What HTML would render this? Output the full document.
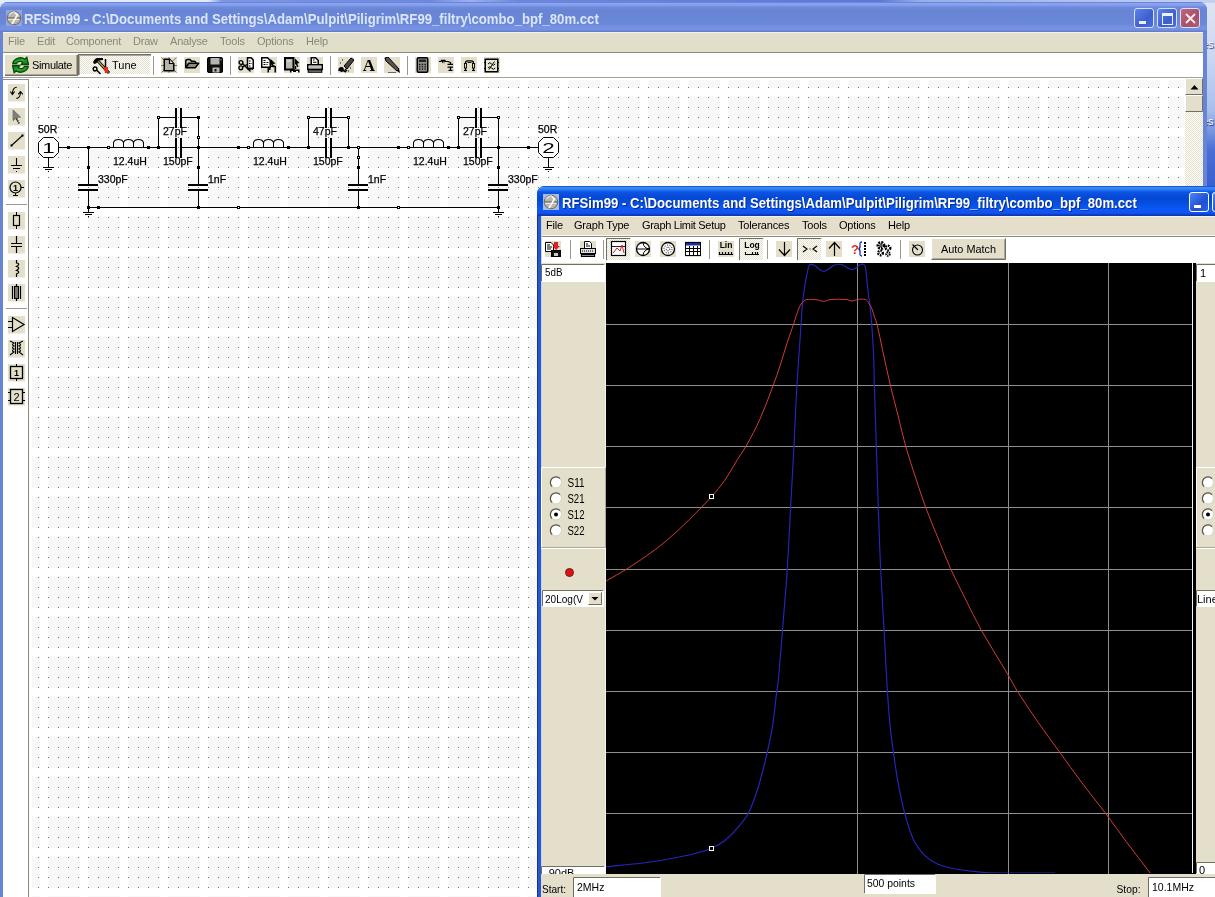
<!DOCTYPE html>
<html>
<head>
<meta charset="utf-8">
<title>RFSim99</title>
<style>
html,body{margin:0;padding:0;}
html{width:1215px;height:897px;overflow:hidden;}
body{width:1215px;height:897px;overflow:hidden;position:relative;font-family:"Liberation Sans",sans-serif;font-size:11px;color:#000;
 background:linear-gradient(to bottom,#dfe6f5 0px,#c9d6f0 60px,#a9bfec 110px,#4a6fd6 150px,#3459cf 200px,#3a63d4 897px);}
.abs{position:absolute;}
#w1,#w2{will-change:transform;}
#w1{position:absolute;left:0;top:2px;width:1207px;height:895px;background:#6884d4;border-radius:8px 8px 0 0;overflow:hidden;}
#w1 .title{position:absolute;left:0;top:0;width:1207px;height:30px;background:linear-gradient(to bottom,#5a76cc 0px,#88a4f2 1.5px,#84a0ee 3px,#6f8bd9 5px,#6884d4 8px,#6a88d8 22px,#7692e4 25px,#7690e0 28px,#5e78c4 30px);}
.ttext{position:absolute;white-space:nowrap;font-family:"Liberation Sans",sans-serif;font-weight:bold;font-size:14px;line-height:14px;transform-origin:0 0;transform:scaleX(0.94);}
#w1 .menu{position:absolute;left:3px;top:30px;width:1200px;height:20px;background:#e1dfc9;box-shadow:inset 0 1px 0 #f2f2ec;}
.mi{position:absolute;top:3px;white-space:nowrap;font-size:11px;letter-spacing:-0.2px;}
#w1 .mi{color:#8b887a;}
#w1 .tb{position:absolute;left:3px;top:50px;width:1200px;height:25px;background:#fff;border-top:1px solid #8d8b7c;box-sizing:border-box;}
#w1 .work{position:absolute;left:3px;top:75px;width:1200px;height:820px;background:#fff;border-top:1px solid #a5a294;box-sizing:border-box;}
.ib{position:absolute;background:#e3dfca;}
#w2{position:absolute;left:537px;top:186px;width:678px;height:711px;background:linear-gradient(to right,#12349e 0,#12349e 1px,#2a56cc 1px,#2a56cc 4px);border-radius:8px 0 0 0;overflow:hidden;}
#w2 .title{position:absolute;left:0;top:0;width:678px;height:30px;background:linear-gradient(to bottom,#0a3cb8 0px,#3a8af8 1.5px,#2c7cf4 3.5px,#0c55e2 6px,#0448d4 12px,#0650e2 18px,#0c58f4 23px,#1452f4 27px,#0a3cb4 29px,#0838b0 30px);}
#w2 .menu{position:absolute;left:4px;top:30px;width:674px;height:20px;background:#e4deca;box-shadow:inset 0 1px 0 #f4f2f4, inset 0 -1px 0 #f8f8f2;}
#w2 .tb{position:absolute;left:4px;top:50px;width:674px;height:27px;background:#fff;border-top:1px solid #8d8b7c;box-sizing:border-box;}
#w2 .body{position:absolute;left:4px;top:77px;width:674px;height:634px;background:#e3dfca;}
.cb{position:absolute;width:18px;height:18px;border:1px solid #d6e0f8;border-radius:3px;}
.inp{position:absolute;background:#fff;border:1px solid #7f9db9;box-sizing:border-box;white-space:nowrap;overflow:hidden;font-size:11px;}
</style>
</head>
<body>
<div class="abs" style="left:0;top:0;width:1215px;height:3px;background:linear-gradient(to right,#e4ebf8 0px,#e4ebf8 208px,#7e96e2 222px,#7088dc 430px,#9cb0ec 470px,#6e86da 520px,#5e78d4 880px,#98aee8 920px,#c4d0f0 1215px);"></div>
<div class="abs" style="left:1207px;top:38px;width:8px;height:14px;overflow:hidden;"><span class="abs" style="left:-5px;top:0;color:#fff;font-size:11px;text-shadow:1px 1px 1px #1a2a6a;">es</span></div>
<div class="abs" style="left:1207px;top:115px;width:8px;height:14px;overflow:hidden;"><span class="abs" style="left:-5px;top:0;color:#fff;font-size:11px;text-shadow:1px 1px 1px #1a2a6a;">es</span></div>
<!-- ================= WINDOW 1 : schematic ================= -->
<div id="w1">
 <div class="title">
  <svg class="abs" style="left:6px;top:8px" width="16" height="16" viewBox="0 0 16 16"><rect width="16" height="16" fill="#8fa6e2"/><circle cx="8" cy="8" r="6.800" fill="#b9b6ad" stroke="#6b6960" stroke-width="1"/><path d="M1.500 8 H14.500" stroke="#55534b" stroke-width="1.200"/><path d="M1.800 9.300 H13" stroke="#f4f2ec" stroke-width="1"/><path d="M6 14 L12 4 M9 2.500 L11 5" stroke="#fbfaf8" stroke-width="1.600"/><path d="M3 5 Q6 1.500 9 2" stroke="#e8e6e0" stroke-width="1.200" fill="none"/></svg>
  <div class="cb" style="left:1134px;top:6px;background:linear-gradient(135deg,#5f82e6,#3c5fcd 60%,#4a6edb);"><div class="abs" style="left:4px;top:12px;width:7px;height:3px;background:#eaf0fc;"></div></div>
  <div class="cb" style="left:1157px;top:6px;background:linear-gradient(135deg,#5f82e6,#3c5fcd 60%,#4a6edb);"><div class="abs" style="left:4px;top:4px;width:9px;height:8px;border:1px solid #eaf0fc;border-top-width:3px;"></div></div>
  <div class="cb" style="left:1180px;top:6px;background:linear-gradient(135deg,#c0647a,#a8506a 60%,#b45c72);"><svg class="abs" style="left:3px;top:3px" width="13" height="13" viewBox="0 0 13 13"><path d="M2 2 L11 11 M11 2 L2 11" stroke="#f6e8ec" stroke-width="2"/></svg></div>
  <div class="ttext" id="t1" style="left:24px;top:10px;color:#dbe5fa;">RFSim99 - C:\Documents and Settings\Adam\Pulpit\Piligrim\RF99_filtry\combo_bpf_80m.cct</div>
 </div>
 <div class="menu">
  <span class="mi" style="left:5px">File</span>
  <span class="mi" style="left:34px">Edit</span>
  <span class="mi" style="left:63px">Component</span>
  <span class="mi" style="left:130px">Draw</span>
  <span class="mi" style="left:167px">Analyse</span>
  <span class="mi" style="left:217px">Tools</span>
  <span class="mi" style="left:254px">Options</span>
  <span class="mi" style="left:303px">Help</span>
 </div>
 <div class="tb" id="tb1">
  <!-- Simulate (raised) -->
  <div class="abs" style="left:1px;top:1px;width:73px;height:21px;background:#e3dfca;box-shadow:inset 1px 1px 0 #fff,inset -1px -1px 0 #aca899, 1px 1px 0 #716f64;"></div>
  <svg class="abs" style="left:9px;top:3px" width="17" height="18" viewBox="0 0 17 18">
   <defs><linearGradient id="gg" x1="0" y1="0" x2="1" y2="1"><stop offset="0" stop-color="#0a6410"/><stop offset="0.500" stop-color="#2eb032"/><stop offset="1" stop-color="#0a6410"/></linearGradient></defs>
   <path d="M0.800 7.500 C1.500 2.500 9 0 12.800 3.300 L14.800 1.300 L16.500 8.500 L9.300 8.500 L10.800 6.500 C8.800 4.600 5.500 5 4.600 7.500 Z" fill="url(#gg)" stroke="#064a08" stroke-width="1.300"/>
   <path d="M16.200 10.500 C15.500 15.500 8 18 4.200 14.700 L2.200 16.700 L0.500 9.500 L7.700 9.500 L6.200 11.500 C8.200 13.400 11.500 13 12.400 10.500 Z" fill="url(#gg)" stroke="#064a08" stroke-width="1.300"/>
  </svg>
  <span class="abs" style="left:29px;top:6px;font-size:11px;letter-spacing:-0.35px;">Simulate</span>
  <!-- Tune (sunken, checked) -->
  <div class="abs" style="left:75px;top:1px;width:73px;height:21px;background:repeating-conic-gradient(#fff 0 25%,#e3dfca 0 50%) 0 0/2px 2px;box-shadow:inset 1px 1px 0 #716f64,inset 2px 2px 0 #aca899,inset -1px -1px 0 #fff;"></div>
  <svg class="abs" style="left:89px;top:4px" width="19" height="18" viewBox="0 0 19 18">
   <path d="M6 4 L17 16" stroke="#000" stroke-width="3"/><path d="M6 4 L16.500 15.500" stroke="#b89a3c" stroke-width="1.400"/>
   <path d="M1 5 L3 2 L5 1 H11 V3 L7 3.500 L4 6.500 L2 7 Z" fill="#000"/>
   <path d="M13.500 2 V10" stroke="#000" stroke-width="1.500"/>
   <path d="M11.800 10 H16 V16 H13 Z" fill="#e0301a"/>
   <path d="M1.500 13 C0 9.500 5 9 5 12 C5 14 2 14.500 1.500 13 M4.500 13 L8.500 17" stroke="#000" stroke-width="1.500" fill="none"/>
  </svg>
  <span class="abs" style="left:109px;top:6px;font-size:11px;letter-spacing:0px;">Tune</span>
  <div class="abs" style="left:150px;top:3px;width:1px;height:19px;background:#9d9a8b;"></div>
  <svg class="abs" style="left:158px;top:4px;background:#e3dfca" width="16" height="16" viewBox="0 0 16 16"><path d="M0.500 0.500 L3 3 M15.500 0.500 L11 4.500 M0.500 15.500 L3 13 M15.500 15.500 L13 13 M0 8.500 H3 M13 8.500 H16 M8 0 V2 M8 14 V16" stroke="#6a6a60" stroke-width="0.900"/><path d="M3.250 2.250 H8.500 L12.750 6.500 V13.750 H3.250 Z" fill="#b4b4ae" stroke="#000" stroke-width="1.500"/><path d="M8.500 2.500 V6.500 H12.500" fill="#e3dfca" stroke="#000" stroke-width="1.200"/></svg>
  <svg class="abs" style="left:181px;top:4px;background:#e3dfca" width="16" height="16" viewBox="0 0 16 16"><path d="M1.750 10 V4 Q1.750 2.500 3.500 2.500 H6 L7.500 4.250 H10.500 Q11.750 4.250 11.750 6" fill="#c4c2b2" stroke="#000" stroke-width="1.500"/><path d="M1.750 10.750 L4.750 6.250 H14.750 L11.250 10.750 Z" fill="#8c8a7c" stroke="#000" stroke-width="1.500" stroke-linejoin="round"/></svg>
  <svg class="abs" style="left:204px;top:4px;background:#e3dfca" width="16" height="16" viewBox="0 0 16 16"><rect x="0.500" y="0.500" width="15" height="15" rx="1.500" fill="#111" stroke="#000"/><rect x="3.500" y="1" width="9" height="6.500" fill="#b4b4b0"/><rect x="5.500" y="10.500" width="7" height="5" fill="#b8b8b4"/><rect x="7.500" y="12" width="2" height="2.500" fill="#111"/><rect x="13.500" y="2" width="1" height="1.500" fill="#999"/></svg>
  <svg class="abs" style="left:235px;top:4px;background:#e3dfca" width="16" height="16" viewBox="0 0 16 16"><path d="M9.500 0.750 H13 L15.250 3 V11.250 H9.500 Z" fill="#fff" stroke="#000" stroke-width="1.500"/><path d="M11 4 H12.500 M11 6.500 H14 M11 9 H12.500" stroke="#000" stroke-width="1.200" stroke-dasharray="1.500 1"/><circle cx="3" cy="5.500" r="1.900" fill="none" stroke="#000" stroke-width="1.400"/><circle cx="2.800" cy="10.800" r="1.900" fill="none" stroke="#000" stroke-width="1.400"/><path d="M4.500 6.500 L12.500 14.500 M4.500 10 L9 7.500 M9 12 H15" stroke="#000" stroke-width="1.400" fill="none"/></svg>
  <svg class="abs" style="left:258px;top:4px;background:#e3dfca" width="16" height="16" viewBox="0 0 16 16"><path d="M0.750 0.750 H6.500 L9.250 3.500 V10.250 H0.750 Z" fill="#fff" stroke="#000" stroke-width="1.500"/><path d="M2.500 3.500 H5 M2.500 5.500 H7.500 M2.500 7.500 H6.500" stroke="#000" stroke-width="1.100" stroke-dasharray="2 1"/><path d="M9.500 2 L14.500 6.500 L12 7 L13.500 10 L12 10.500 L10.500 7.500 L9.500 9 Z" fill="#000"/><path d="M7.250 10.500 V15.500 M8.750 10.500 V13 M14.250 9 V15.500 M9 9.250 H14" stroke="#000" stroke-width="1.500" fill="none"/></svg>
  <svg class="abs" style="left:281px;top:4px;background:#e3dfca" width="16" height="16" viewBox="0 0 16 16"><rect x="1" y="1" width="8.500" height="11.500" fill="#b8b8b2" stroke="#000" stroke-width="2"/><rect x="2.500" y="0" width="5.500" height="2" fill="#000"/><rect x="3" y="3.500" width="4.500" height="1" fill="#e8e8e4"/><path d="M11 1.500 L15.500 6 L13.200 6.400 L14.500 9.500 L13 10 L11.800 7 L11 8 Z" fill="#000"/><path d="M11.500 9 V12" stroke="#000" stroke-width="1.500"/><path d="M6.750 15.500 V13.250 H14.750 V15.500" fill="#fff" stroke="#000" stroke-width="1.500"/><path d="M9 14.500 H12" stroke="#000"/></svg>
  <svg class="abs" style="left:304px;top:4px;background:#e3dfca" width="16" height="16" viewBox="0 0 16 16"><path d="M4.250 7.500 V0.750 H8.500 L11.250 3.500 V7.500" fill="#fff" stroke="#000" stroke-width="1.500"/><path d="M6 3 H7.500 M6 5.250 H9.500" stroke="#000" stroke-width="1.200"/><rect x="0.750" y="7.750" width="14.500" height="4.500" fill="#fff" stroke="#000" stroke-width="1.500"/><path d="M2.500 10 H13.500" stroke="#000" stroke-width="1.200" stroke-dasharray="1 1"/><rect x="1.250" y="13" width="13.500" height="2.250" fill="#8a8a84" stroke="#000" stroke-width="1"/></svg>
  <svg class="abs" style="left:335px;top:4px;background:#e3dfca" width="16" height="16" viewBox="0 0 16 16"><path d="M6 9 L13 1 L16 3 L9 12 Z" fill="#444" stroke="#000"/><path d="M1 14 C1 10 5 10 5 12 C5 15 1 15 3 12 L8 15 M7 12 L9 14" stroke="#000" stroke-width="1.500" fill="none"/><path d="M2 6 h1 M4 3 h1 M10 14 h1 M12 11 h1" stroke="#000"/></svg>
  <svg class="abs" style="left:358px;top:4px;background:#e3dfca" width="16" height="16" viewBox="0 0 16 16"><text x="8" y="14" font-family="Liberation Serif,serif" font-weight="bold" font-size="17" text-anchor="middle" fill="#000">A</text></svg>
  <svg class="abs" style="left:381px;top:4px;background:#e3dfca" width="16" height="16" viewBox="0 0 16 16"><path d="M1 1 L4 0 L15 12 L13 14 L2 4 Z" fill="#555" stroke="#000"/><path d="M13 14 L16 16 L15 12" fill="#000"/><path d="M4 15.500 H12" stroke="#666"/></svg>
  <svg class="abs" style="left:412px;top:4px;background:#e3dfca" width="16" height="16" viewBox="0 0 16 16"><rect x="2.250" y="0.750" width="10.500" height="14.500" rx="1.200" fill="#8e8e8a" stroke="#000" stroke-width="1.500"/><rect x="4" y="2.500" width="7" height="2.500" fill="#222"/><path d="M4 7.500 H11 M4 9.800 H11 M4 12.200 H11" stroke="#111" stroke-width="1.300" stroke-dasharray="1.500 1.200"/></svg>
  <svg class="abs" style="left:435px;top:4px;background:#e3dfca" width="16" height="16" viewBox="0 0 16 16"><path d="M1 4.500 H3 q0.700 -2.800 1.500 0 q0.700 -2.800 1.500 0 q0.700 -2.800 1.500 0 L10 4.500 L12.500 5.500" fill="none" stroke="#000" stroke-width="1.100"/><path d="M12.500 5 V7 M9.500 7.300 H15 M9.500 10.200 H15 M12.500 10.500 V13 M10.500 13.300 H14.500" stroke="#000" stroke-width="1.300" fill="none"/></svg>
  <svg class="abs" style="left:458px;top:4px;background:#e3dfca" width="16" height="16" viewBox="0 0 16 16"><path d="M4.500 13 V6 Q4.500 3.800 6.500 3.800 H10.500 Q12.500 3.800 12.500 6 V13" fill="none" stroke="#000" stroke-width="1.300"/><path d="M6.500 5.500 H10.500" stroke="#000" stroke-width="0.900"/><rect x="3.500" y="6.500" width="2" height="4.500" fill="#e3dfca" stroke="#000" stroke-width="0.900"/><rect x="11.500" y="6.500" width="2" height="4.500" fill="#e3dfca" stroke="#000" stroke-width="0.900"/><path d="M3 13.500 H6 M11 13.500 H14" stroke="#000" stroke-width="1.200"/></svg>
  <svg class="abs" style="left:481px;top:4px;background:#e3dfca" width="16" height="16" viewBox="0 0 16 16"><rect x="1.250" y="2.250" width="12.500" height="12.500" fill="#e8e5d4" stroke="#000" stroke-width="1.500"/><path d="M4 7 q1.800 -2.600 3.600 0 t3.600 0 M4 11 q1.800 -2.600 3.600 0 t3.600 0 M5 12.500 L10.500 4.500" stroke="#000" fill="none" stroke-width="1"/><path d="M0 5.500 H1.500 M0 11.500 H1.500 M13.500 5.500 H15 M13.500 11.500 H15" stroke="#000"/></svg>
  <div class="abs" style="left:227px;top:3px;width:1px;height:19px;background:#9d9a8b;"></div>
  <div class="abs" style="left:327px;top:3px;width:1px;height:19px;background:#9d9a8b;"></div>
  <div class="abs" style="left:404px;top:3px;width:1px;height:19px;background:#9d9a8b;"></div>
 </div>
 <div class="work" id="work1"></div>
<svg class="abs" style="left:0;top:-2px" width="1207" height="897" viewBox="0 0 1207 897" font-family="Liberation Sans, sans-serif">
<defs><pattern id="dith" x="0" y="0" width="2" height="2" patternUnits="userSpaceOnUse"><rect width="2" height="2" fill="#fff"/><rect x="0" y="0" width="1" height="1" fill="#e3dfca"/><rect x="1" y="1" width="1" height="1" fill="#e3dfca"/></pattern><pattern id="grid" x="0" y="0" width="10" height="10" patternUnits="userSpaceOnUse"><rect x="8" y="7" width="1" height="1" fill="#747474"/></pattern><pattern id="jpg" x="0" y="0" width="40" height="40" patternUnits="userSpaceOnUse"><rect x="8" y="0" width="32" height="8" fill="#f8f8f8"/><rect x="8" y="16" width="32" height="24" fill="#f8f8f8"/></pattern></defs>
<rect x="32" y="80" width="1152" height="817" fill="url(#jpg)"/><rect x="29" y="78" width="1156" height="819" fill="url(#grid)"/>
<!-- left toolbar frame -->
<rect x="3" y="79" width="26" height="1" fill="#8d8b9c"/><rect x="28" y="79" width="1" height="818" fill="#8d8b7c"/>
<g transform="translate(8,84)"><rect width="17" height="17.500" fill="#e3dfca"/><path d="M8.800 3.300 Q4.800 3.300 4.400 9.800 M2.300 7.500 L4.400 10.500 L6.700 7.500 M8.300 14.400 Q12.300 14.400 12.500 8 M10.200 10.300 L12.500 7.500 L14.800 10.300" fill="none" stroke="#000" stroke-width="1.100"/></g>
<g transform="translate(8,108)"><rect width="17" height="17.500" fill="#e3dfca"/><path d="M5.200 2.200 V12.400 L8 10.200 L9.500 13 M12.800 9.400 L5.200 2.200" fill="#7e7e7a" stroke="#4a4a46" stroke-width="0.900"/><path d="M5.200 2.200 V12.400 L8 10.200 L12.800 9.400 Z" fill="#7e7e7a"/><path d="M8.500 10.500 L11 15.500" stroke="#222" stroke-width="1.800" stroke-dasharray="1.300 0.900"/></g>
<g transform="translate(8,132)"><rect width="17" height="17.500" fill="#e3dfca"/><path d="M3.500 13.500 L14.500 3.500" stroke="#000" stroke-width="1.100"/><rect x="2.500" y="12.500" width="2" height="2" fill="#000"/><rect x="13.500" y="2.500" width="2" height="2" fill="#000"/></g>
<g transform="translate(8,156)"><rect width="17" height="17.500" fill="#e3dfca"/><path d="M8.500 2 V9 M3 9.500 H14 M5 12.500 H12 M8 15.500 H9" stroke="#000" stroke-width="1.100" fill="none"/></g>
<g transform="translate(8,180)"><rect width="17" height="17.500" fill="#e3dfca"/><circle cx="7.500" cy="7.500" r="5.500" fill="none" stroke="#000" stroke-width="1.200"/><path d="M13 7.500 H16 M7.500 13 V15 M5 15.500 H10" stroke="#000"/><text x="7.500" y="11" font-size="9" font-weight="bold" text-anchor="middle">1</text></g>
<g transform="translate(8,212)"><rect width="17" height="17.500" fill="#e3dfca"/><path d="M8.500 0 V4 M8.500 13 V17" stroke="#000"/><rect x="5.500" y="3.500" width="6" height="10" fill="none" stroke="#000" stroke-width="1.200"/></g>
<g transform="translate(8,236)"><rect width="17" height="17.500" fill="#e3dfca"/><path d="M8.500 0 V7 M8.500 11 V17 M3 7.500 H14 M3 10.500 H14" stroke="#000" stroke-width="1.200"/></g>
<g transform="translate(8,260)"><rect width="17" height="17.500" fill="#e3dfca"/><path d="M8.500 0 V3 Q13 3.500 8.500 6.500 Q13 7.500 8.500 10.500 Q13 11.500 8.500 14 V17" fill="none" stroke="#000" stroke-width="1.200"/></g>
<g transform="translate(8,284)"><rect width="17" height="17.500" fill="#e3dfca"/><path d="M8.500 0 V2 M8.500 15 V17 M4.500 2 V15 M12.500 2 V15" stroke="#000" stroke-width="1.200"/><rect x="6.500" y="2.500" width="4" height="12" fill="#777" stroke="#000"/></g>
<g transform="translate(8,316)"><rect width="17" height="17.500" fill="#e3dfca"/><path d="M0 5.500 H4 M0 11.500 H4 M4.500 1.500 V15.500 L16 8.500 Z" fill="none" stroke="#000" stroke-width="1.200"/></g>
<g transform="translate(8,340)"><rect width="17" height="17.500" fill="#e3dfca"/><path d="M2 1 L6 3 Q3 5 6 6 Q3 8 6 9 Q3 11 6 12 L2 15 M15 1 L11 3 Q14 5 11 6 Q14 8 11 9 Q14 11 11 12 L15 15 M7.500 2 V14 M9.500 2 V14" fill="none" stroke="#000" stroke-width="1.100"/></g>
<g transform="translate(8,364)"><rect width="17" height="17.500" fill="#e3dfca"/><rect x="2.500" y="2.500" width="12" height="12" fill="none" stroke="#000" stroke-width="1.300"/><path d="M8.500 0 V2 M8.500 15 V17" stroke="#000"/><text x="8.500" y="12" font-size="9" font-weight="bold" text-anchor="middle">1</text></g>
<g transform="translate(8,388)"><rect width="17" height="17.500" fill="#e3dfca"/><rect x="2.500" y="1.500" width="12" height="14" fill="none" stroke="#000" stroke-width="1.300"/><path d="M0 4.500 H2 M0 12.500 H2 M15 4.500 H17 M15 12.500 H17" stroke="#000"/><text x="8.500" y="12.500" font-size="11" text-anchor="middle">2</text></g>
<rect x="6" y="204" width="21" height="1" fill="#9d9a8b"/><rect x="6" y="308" width="21" height="1" fill="#9d9a8b"/>

<!-- vertical scrollbar -->
<g id="vsb">
<rect x="1185" y="78" width="18" height="819" fill="url(#dith)"/>
<rect x="1185" y="78" width="18" height="17" fill="#e3dfca"/><path d="M1185.500 94.500 V78.500 H1202.500" stroke="#fff" fill="none"/><path d="M1185.500 94.500 H1202.500 V78.500" stroke="#716f64" fill="none"/>
<path d="M1190.500 89.500 L1194.500 85 L1198.500 89.500 Z" fill="#000"/>
<rect x="1185" y="95" width="18" height="17" fill="#e3dfca"/><path d="M1185.500 111.500 V95.500 H1202.500" stroke="#fff" fill="none"/><path d="M1185.500 111.500 H1202.500 V95.500" stroke="#716f64" fill="none"/>
</g>
<!-- circuit -->
<rect x="59" y="147" width="117" height="1" fill="#000"/>
<rect x="182" y="147" width="144" height="1" fill="#000"/>
<rect x="332" y="147" width="144" height="1" fill="#000"/>
<rect x="482" y="147" width="56" height="1" fill="#000"/>
<rect x="88" y="207" width="411" height="1" fill="#000"/>
<rect x="175" y="138" width="2" height="20" fill="#000"/>
<rect x="180" y="138" width="2" height="20" fill="#000"/>
<rect x="175" y="108" width="2" height="20" fill="#000"/>
<rect x="180" y="108" width="2" height="20" fill="#000"/>
<rect x="158" y="117" width="17" height="1" fill="#000"/>
<rect x="182" y="117" width="17" height="1" fill="#000"/>
<rect x="158" y="117" width="1" height="31" fill="#000"/>
<rect x="198" y="117" width="1" height="31" fill="#000"/>
<text x="163" y="135" font-size="10.5" stroke="#000" stroke-width="0.25">27pF</text>
<text x="163" y="165" font-size="10.5" stroke="#000" stroke-width="0.25">150pF</text>
<rect x="325" y="138" width="2" height="20" fill="#000"/>
<rect x="330" y="138" width="2" height="20" fill="#000"/>
<rect x="325" y="108" width="2" height="20" fill="#000"/>
<rect x="330" y="108" width="2" height="20" fill="#000"/>
<rect x="308" y="117" width="17" height="1" fill="#000"/>
<rect x="332" y="117" width="17" height="1" fill="#000"/>
<rect x="308" y="117" width="1" height="31" fill="#000"/>
<rect x="348" y="117" width="1" height="31" fill="#000"/>
<text x="313" y="135" font-size="10.5" stroke="#000" stroke-width="0.25">47pF</text>
<text x="313" y="165" font-size="10.5" stroke="#000" stroke-width="0.25">150pF</text>
<rect x="475" y="138" width="2" height="20" fill="#000"/>
<rect x="480" y="138" width="2" height="20" fill="#000"/>
<rect x="475" y="108" width="2" height="20" fill="#000"/>
<rect x="480" y="108" width="2" height="20" fill="#000"/>
<rect x="458" y="117" width="17" height="1" fill="#000"/>
<rect x="482" y="117" width="17" height="1" fill="#000"/>
<rect x="458" y="117" width="1" height="31" fill="#000"/>
<rect x="498" y="117" width="1" height="31" fill="#000"/>
<text x="463" y="135" font-size="10.5" stroke="#000" stroke-width="0.25">27pF</text>
<text x="463" y="165" font-size="10.5" stroke="#000" stroke-width="0.25">150pF</text>
<rect x="108" y="147" width="6" height="1" fill="#000"/>
<rect x="143" y="147" width="6" height="1" fill="#000"/>
<rect x="113" y="142" width="1" height="6" fill="#000"/>
<rect x="143" y="142" width="1" height="6" fill="#000"/>
<rect x="123" y="142" width="1" height="6" fill="#000"/>
<rect x="133" y="142" width="1" height="6" fill="#000"/>
<path d="M113.5 142.5 Q114.5 139.5 118.5 139.5 Q122.5 139.5 123.5 142.5 M123.5 142.5 Q124.5 139.5 128.5 139.5 Q132.5 139.5 133.5 142.5 M133.5 142.5 Q134.5 139.5 138.5 139.5 Q142.5 139.5 143.5 142.5" fill="none" stroke="#000" stroke-width="1.1"/>
<rect x="107" y="146" width="3" height="3" fill="#000"/><rect x="108" y="147" width="1" height="1" fill="#fff"/>
<rect x="147" y="146" width="3" height="3" fill="#000"/>
<text x="113" y="165" font-size="10.5" stroke="#000" stroke-width="0.25">12.4uH</text>
<rect x="248" y="147" width="6" height="1" fill="#000"/>
<rect x="283" y="147" width="6" height="1" fill="#000"/>
<rect x="253" y="142" width="1" height="6" fill="#000"/>
<rect x="283" y="142" width="1" height="6" fill="#000"/>
<rect x="263" y="142" width="1" height="6" fill="#000"/>
<rect x="273" y="142" width="1" height="6" fill="#000"/>
<path d="M253.5 142.5 Q254.5 139.5 258.5 139.5 Q262.5 139.5 263.5 142.5 M263.5 142.5 Q264.5 139.5 268.5 139.5 Q272.5 139.5 273.5 142.5 M273.5 142.5 Q274.5 139.5 278.5 139.5 Q282.5 139.5 283.5 142.5" fill="none" stroke="#000" stroke-width="1.1"/>
<rect x="247" y="146" width="3" height="3" fill="#000"/><rect x="248" y="147" width="1" height="1" fill="#fff"/>
<rect x="287" y="146" width="3" height="3" fill="#000"/>
<text x="253" y="165" font-size="10.5" stroke="#000" stroke-width="0.25">12.4uH</text>
<rect x="408" y="147" width="6" height="1" fill="#000"/>
<rect x="443" y="147" width="6" height="1" fill="#000"/>
<rect x="413" y="142" width="1" height="6" fill="#000"/>
<rect x="443" y="142" width="1" height="6" fill="#000"/>
<rect x="423" y="142" width="1" height="6" fill="#000"/>
<rect x="433" y="142" width="1" height="6" fill="#000"/>
<path d="M413.5 142.5 Q414.5 139.5 418.5 139.5 Q422.5 139.5 423.5 142.5 M423.5 142.5 Q424.5 139.5 428.5 139.5 Q432.5 139.5 433.5 142.5 M433.5 142.5 Q434.5 139.5 438.5 139.5 Q442.5 139.5 443.5 142.5" fill="none" stroke="#000" stroke-width="1.1"/>
<rect x="407" y="146" width="3" height="3" fill="#000"/><rect x="408" y="147" width="1" height="1" fill="#fff"/>
<rect x="447" y="146" width="3" height="3" fill="#000"/>
<text x="413" y="165" font-size="10.5" stroke="#000" stroke-width="0.25">12.4uH</text>
<rect x="88" y="147" width="1" height="38" fill="#000"/>
<rect x="88" y="190" width="1" height="18" fill="#000"/>
<rect x="78" y="184" width="20" height="2" fill="#000"/>
<rect x="78" y="189" width="20" height="2" fill="#000"/>
<text x="98" y="183" font-size="10.5" stroke="#000" stroke-width="0.25">330pF</text>
<rect x="198" y="147" width="1" height="38" fill="#000"/>
<rect x="198" y="190" width="1" height="18" fill="#000"/>
<rect x="188" y="184" width="20" height="2" fill="#000"/>
<rect x="188" y="189" width="20" height="2" fill="#000"/>
<text x="208" y="183" font-size="10.5" stroke="#000" stroke-width="0.25">1nF</text>
<rect x="358" y="147" width="1" height="38" fill="#000"/>
<rect x="358" y="190" width="1" height="18" fill="#000"/>
<rect x="348" y="184" width="20" height="2" fill="#000"/>
<rect x="348" y="189" width="20" height="2" fill="#000"/>
<text x="368" y="183" font-size="10.5" stroke="#000" stroke-width="0.25">1nF</text>
<rect x="498" y="147" width="1" height="38" fill="#000"/>
<rect x="498" y="190" width="1" height="18" fill="#000"/>
<rect x="488" y="184" width="20" height="2" fill="#000"/>
<rect x="488" y="189" width="20" height="2" fill="#000"/>
<text x="508" y="183" font-size="10.5" stroke="#000" stroke-width="0.25">330pF</text>
<rect x="67" y="146" width="3" height="3" fill="#000"/>
<rect x="87" y="146" width="3" height="3" fill="#000"/>
<rect x="87" y="166" width="3" height="3" fill="#000"/>
<rect x="87" y="206" width="3" height="3" fill="#000"/><rect x="88" y="207" width="1" height="1" fill="#fff"/>
<rect x="97" y="206" width="3" height="3" fill="#000"/>
<rect x="88" y="207" width="1" height="6" fill="#000"/>
<rect x="83" y="212" width="11" height="1" fill="#000"/>
<rect x="85" y="214" width="7" height="1" fill="#000"/>
<rect x="88" y="216" width="1" height="1" fill="#000"/>
<rect x="157" y="146" width="3" height="3" fill="#000"/>
<rect x="157" y="116" width="3" height="3" fill="#000"/><rect x="158" y="117" width="1" height="1" fill="#fff"/>
<rect x="197" y="116" width="3" height="3" fill="#000"/>
<rect x="197" y="136" width="3" height="3" fill="#000"/><rect x="198" y="137" width="1" height="1" fill="#fff"/>
<rect x="197" y="146" width="3" height="3" fill="#000"/>
<rect x="197" y="166" width="3" height="3" fill="#000"/>
<rect x="197" y="206" width="3" height="3" fill="#000"/>
<rect x="237" y="206" width="3" height="3" fill="#000"/><rect x="238" y="207" width="1" height="1" fill="#fff"/>
<rect x="237" y="146" width="3" height="3" fill="#000"/>
<rect x="307" y="146" width="3" height="3" fill="#000"/>
<rect x="307" y="116" width="3" height="3" fill="#000"/><rect x="308" y="117" width="1" height="1" fill="#fff"/>
<rect x="347" y="116" width="3" height="3" fill="#000"/><rect x="348" y="117" width="1" height="1" fill="#fff"/>
<rect x="347" y="146" width="3" height="3" fill="#000"/>
<rect x="357" y="146" width="3" height="3" fill="#000"/><rect x="358" y="147" width="1" height="1" fill="#fff"/>
<rect x="357" y="156" width="3" height="3" fill="#000"/><rect x="358" y="157" width="1" height="1" fill="#fff"/>
<rect x="357" y="166" width="3" height="3" fill="#000"/>
<rect x="357" y="206" width="3" height="3" fill="#000"/>
<rect x="397" y="206" width="3" height="3" fill="#000"/><rect x="398" y="207" width="1" height="1" fill="#fff"/>
<rect x="397" y="146" width="3" height="3" fill="#000"/>
<rect x="457" y="146" width="3" height="3" fill="#000"/>
<rect x="457" y="116" width="3" height="3" fill="#000"/><rect x="458" y="117" width="1" height="1" fill="#fff"/>
<rect x="497" y="116" width="3" height="3" fill="#000"/><rect x="498" y="117" width="1" height="1" fill="#fff"/>
<rect x="497" y="146" width="3" height="3" fill="#000"/>
<rect x="497" y="166" width="3" height="3" fill="#000"/>
<rect x="497" y="206" width="3" height="3" fill="#000"/>
<rect x="498" y="207" width="1" height="6" fill="#000"/>
<rect x="493" y="212" width="11" height="1" fill="#000"/>
<rect x="495" y="214" width="7" height="1" fill="#000"/>
<rect x="498" y="216" width="1" height="1" fill="#000"/>
<rect x="527" y="146" width="3" height="3" fill="#000"/>
<polygon points="43.5,137.5 53.5,137.5 58.5,142.5 58.5,152.5 53.5,157.5 43.5,157.5 38.5,152.5 38.5,142.5" fill="#fff" stroke="#000" stroke-width="1"/>
<text transform="translate(48.5,152.5) scale(1.6,1)" font-size="14" text-anchor="middle">1</text>
<rect x="48" y="157" width="1" height="11" fill="#000"/>
<rect x="43" y="167" width="11" height="1" fill="#000"/>
<rect x="45" y="169" width="7" height="1" fill="#000"/>
<rect x="48" y="171" width="1" height="1" fill="#000"/>
<polygon points="543.5,137.5 553.5,137.5 558.5,142.5 558.5,152.5 553.5,157.5 543.5,157.5 538.5,152.5 538.5,142.5" fill="#fff" stroke="#000" stroke-width="1"/>
<text transform="translate(548.5,152.5) scale(1.6,1)" font-size="14" text-anchor="middle">2</text>
<rect x="548" y="157" width="1" height="11" fill="#000"/>
<rect x="543" y="167" width="11" height="1" fill="#000"/>
<rect x="545" y="169" width="7" height="1" fill="#000"/>
<rect x="548" y="171" width="1" height="1" fill="#000"/>
<text x="38" y="133" font-size="10.5" stroke="#000" stroke-width="0.25">50R</text>
<text x="538" y="133" font-size="10.5" stroke="#000" stroke-width="0.25">50R</text>
</svg>
</div>
<!-- ================= WINDOW 2 : graph ================= -->
<div id="w2">
 <div class="title">
  <svg class="abs" style="left:6px;top:8px" width="16" height="16" viewBox="0 0 16 16"><rect width="16" height="16" fill="#a9bbe8"/><circle cx="8" cy="8" r="6.800" fill="#b9b6ad" stroke="#6b6960" stroke-width="1"/><path d="M1.500 8 H14.500" stroke="#55534b" stroke-width="1.200"/><path d="M1.800 9.300 H13" stroke="#f4f2ec" stroke-width="1"/><path d="M6 14 L12 4 M9 2.500 L11 5" stroke="#fbfaf8" stroke-width="1.600"/><path d="M3 5 Q6 1.500 9 2" stroke="#e8e6e0" stroke-width="1.200" fill="none"/></svg>
  <div class="cb" style="left:652px;top:6px;border-color:#fff;background:linear-gradient(135deg,#4a86f8,#1f4fd4 60%,#2e63e6);"><div class="abs" style="left:4px;top:12px;width:7px;height:3px;background:#fff;"></div></div>
  <div class="cb" style="left:675px;top:6px;border-color:#fff;background:linear-gradient(135deg,#4a86f8,#1f4fd4 60%,#2e63e6);"></div>
  <div class="ttext" id="t2" style="left:25px;top:10px;color:#fff;text-shadow:1px 1px 0 #0a2a8a;">RFSim99 - C:\Documents and Settings\Adam\Pulpit\Piligrim\RF99_filtry\combo_bpf_80m.cct</div>
 </div>
 <div class="menu">
  <span class="mi" style="left:5px">File</span>
  <span class="mi" style="left:33px">Graph Type</span>
  <span class="mi" style="left:101px;letter-spacing:-0.3px">Graph Limit Setup</span>
  <span class="mi" style="left:197px">Tolerances</span>
  <span class="mi" style="left:261px">Tools</span>
  <span class="mi" style="left:298px">Options</span>
  <span class="mi" style="left:347px">Help</span>
 </div>
 <div class="tb" id="tb2"></div>
 <div class="body" id="body2"></div>
<svg class="abs" style="left:-537px;top:-186px" width="1215" height="897" viewBox="0 0 1215 897" font-family="Liberation Sans, sans-serif">
<!-- toolbar icons -->
<g transform="translate(545,241)"><rect width="16" height="16" fill="#e3dfca"/><path d="M0.500 1.500 H6 L8.500 4 V10.500 H0.500 Z" fill="#fff" stroke="#000"/><path d="M2 4 H5 M2 6 H7 M2 8 H6" stroke="#000"/><path d="M9 1 H13 V5 H15 L11 9 L7.500 5 H9 Z" fill="#e02020"/><rect x="6.500" y="9.500" width="9" height="6" fill="#111" stroke="#000"/><rect x="9" y="12" width="4" height="3" fill="#ccc"/></g>
<rect x="570" y="240" width="1" height="19" fill="#9d9a8b"/>
<g transform="translate(580,241)"><rect width="16" height="16" fill="#e3dfca"/><path d="M4.500 7 V0.500 H9.500 L11.500 2.500 V7" fill="#fff" stroke="#000"/><path d="M6 3 H8 M6 5 H10" stroke="#000"/><rect x="0.500" y="7.500" width="15" height="5" fill="#ddd" stroke="#000"/><path d="M2 10 H14" stroke="#000" stroke-dasharray="1 1"/><rect x="1.500" y="13.500" width="13" height="2" fill="#888" stroke="#000"/></g>
<rect x="603" y="240" width="1" height="19" fill="#9d9a8b"/>
<rect x="606" y="238" width="25" height="23" fill="url(#dith)"/><path d="M606.5 260.5 V238.5 H630.5" stroke="#716f64" fill="none"/><path d="M606.5 260.5 H630.5 V238.5" stroke="#fff" fill="none"/>
<g transform="translate(611,241)"><rect width="16" height="16" fill="none"/><rect x="0.500" y="0.500" width="14" height="14" fill="#fff" stroke="#000" stroke-width="1.2"/><path d="M1 5.500 H14" stroke="#223" /><path d="M2 12 L6 7 L9 10 L11 4 L13 12" fill="none" stroke="#d02020"/></g>
<g transform="translate(635,241)"><rect width="16" height="16" fill="#e3dfca"/><circle cx="8" cy="8" r="6.500" fill="#fff" stroke="#000" stroke-width="1.300"/><path d="M1.500 8 H14.500 M14.500 8 Q9 7.500 8 2 M14.500 8 Q9 8.500 8 14" fill="none" stroke="#000"/></g>
<g transform="translate(660,241)"><rect width="16" height="16" fill="#e3dfca"/><circle cx="8" cy="8" r="6.500" fill="#fff" stroke="#000" stroke-width="1.300"/><circle cx="8" cy="8" r="4" fill="none" stroke="#000" stroke-dasharray="1 1.500"/><circle cx="8" cy="8" r="1.800" fill="none" stroke="#000" stroke-dasharray="1 1"/></g>
<g transform="translate(685,241)"><rect width="16" height="16" fill="#e3dfca"/><rect x="0.500" y="1.500" width="15" height="13" fill="#fff" stroke="#000"/><rect x="1" y="2" width="14" height="2.500" fill="#1c2ca8"/><path d="M1 7.500 H15 M1 10.500 H15 M4.500 5 V14 M8.500 5 V14 M12.500 5 V14" stroke="#000"/></g>
<rect x="709" y="240" width="1" height="19" fill="#9d9a8b"/>
<g transform="translate(718,241)"><rect width="16" height="16" fill="#e3dfca"/><text x="8" y="7" font-size="8.500" font-weight="bold" text-anchor="middle" font-family="Liberation Sans, sans-serif">Lin</text><path d="M1 13.500 H15 M1.500 11 V14 M4.500 11 V14 M7.500 11 V14 M10.500 11 V14 M13.500 11 V14" stroke="#000" stroke-width="1.200"/></g>
<rect x="739" y="238" width="25" height="23" fill="url(#dith)"/><path d="M739.5 260.5 V238.5 H763.5" stroke="#716f64" fill="none"/><path d="M739.5 260.5 H763.5 V238.5" stroke="#fff" fill="none"/>
<g transform="translate(744,241)"><rect width="16" height="16" fill="none"/><text x="8" y="7" font-size="8.500" font-weight="bold" text-anchor="middle" font-family="Liberation Sans, sans-serif">Log</text><path d="M1 13.500 H15 M1.500 11 V14 M8.500 11 V14 M11.500 11 V14 M13.500 11 V14" stroke="#000" stroke-width="1.200"/></g>
<rect x="767" y="240" width="1" height="19" fill="#9d9a8b"/>
<g transform="translate(776,241)"><rect width="16" height="16" fill="#e3dfca"/><path d="M8.500 1 V14 M3 8.500 L8.500 14.500 L14 8.500" fill="none" stroke="#000" stroke-width="1.200"/></g>
<rect x="797" y="238" width="25" height="23" fill="url(#dith)"/><path d="M797.5 260.5 V238.5 H821.5" stroke="#716f64" fill="none"/><path d="M797.5 260.5 H821.5 V238.5" stroke="#fff" fill="none"/>
<g transform="translate(802,241)"><rect width="16" height="16" fill="none"/><path d="M1 5 L5 8 L1 11 M15 5 L11 8 L15 11" fill="none" stroke="#000" stroke-width="1.200"/><rect x="7.500" y="7.500" width="1" height="1" fill="#000"/></g>
<g transform="translate(826,241)"><rect width="16" height="16" fill="#e3dfca"/><path d="M8.500 15 V2 M3 7.500 L8.500 1.500 L14 7.500" fill="none" stroke="#000" stroke-width="1.200"/></g>
<g transform="translate(851,241)"><rect width="16" height="16" fill="#fff"/><text x="4" y="13" font-size="13" font-weight="bold" text-anchor="middle" fill="#e03010" font-family="Liberation Sans, sans-serif">?</text><path d="M11 1 Q8.500 1 9 4 Q9.500 7.500 7.500 8 Q9.500 8.500 9 12 Q8.500 15 11 15" fill="none" stroke="#1030c0" stroke-width="1.300"/><path d="M14 1 V15" stroke="#000" stroke-width="2" stroke-dasharray="2 1"/></g>
<g transform="translate(876,241)"><rect width="16" height="16" fill="#fff"/><circle cx="5" cy="4.500" r="3" fill="#fff" stroke="#000" stroke-width="3" stroke-dasharray="1.800 1"/><circle cx="5" cy="4.500" r="1" fill="#fff" stroke="#000"/><circle cx="12" cy="7" r="2.300" fill="#fff" stroke="#000" stroke-width="2.400" stroke-dasharray="1.500 0.900"/><circle cx="4.500" cy="12" r="2.300" fill="#fff" stroke="#000" stroke-width="2.400" stroke-dasharray="1.500 0.900"/><circle cx="12" cy="13" r="1.800" fill="#fff" stroke="#000" stroke-width="2" stroke-dasharray="1.300 0.800"/></g>
<rect x="900" y="240" width="1" height="19" fill="#9d9a8b"/>
<g transform="translate(909,241)"><rect width="16" height="16" fill="#e3dfca"/><circle cx="8.500" cy="9" r="5" fill="none" stroke="#000" stroke-width="1.100"/><path d="M3.500 3.500 L9 9" fill="none" stroke="#000" stroke-width="1.100"/></g>
<rect x="931" y="238" width="75" height="22" fill="#e3dfca"/><path d="M931.500 259.500 V238.500 H1005.500" stroke="#fff" fill="none"/><path d="M931.500 259.500 H1005.500 V238.500" stroke="#716f64" fill="none"/><path d="M932.500 258.500 H1004.500 V239.500" stroke="#aca899" fill="none"/>
<text x="941" y="253" font-size="11" textLength="55" lengthAdjust="spacingAndGlyphs">Auto Match</text>

<!-- graph -->
<rect x="606" y="263" width="590" height="611" fill="#000"/>
<rect x="606" y="324" width="587" height="1" fill="#8e8e8e"/>
<rect x="606" y="385" width="587" height="1" fill="#8e8e8e"/>
<rect x="606" y="446" width="587" height="1" fill="#8e8e8e"/>
<rect x="606" y="507" width="587" height="1" fill="#8e8e8e"/>
<rect x="606" y="569" width="587" height="1" fill="#8e8e8e"/>
<rect x="606" y="630" width="587" height="1" fill="#8e8e8e"/>
<rect x="606" y="691" width="587" height="1" fill="#8e8e8e"/>
<rect x="606" y="752" width="587" height="1" fill="#8e8e8e"/>
<rect x="606" y="813" width="587" height="1" fill="#8e8e8e"/>
<rect x="857" y="263" width="1" height="611" fill="#8e8e8e"/>
<rect x="1008" y="263" width="1" height="611" fill="#8e8e8e"/>
<rect x="1108" y="263" width="1" height="611" fill="#8e8e8e"/>
<rect x="1192" y="263" width="1" height="610" fill="#f4f4f4"/>
<clipPath id="gclip"><rect x="606" y="263" width="586" height="610"/></clipPath>
<g clip-path="url(#gclip)">
<path d="M606 866.8 C618.9 865.5 631.8 864.5 644.6 862.8 C655.8 861.3 666.9 859.4 678 857.3 C684.7 856 691.5 854.6 698.1 852.8 C702.7 851.6 707.2 850.3 711.5 848.3 C716.2 846.1 720.8 843.7 724.9 840.5 C729.8 836.6 734.1 832 738.2 827.2 C741.9 822.9 745.7 818.4 748.3 813.3 C752.5 804.9 755.5 796 758.3 787 C761.8 775.7 764.5 764.1 767.2 752.5 C769.3 743.3 771.3 734 772.8 724.6 C774.5 713.5 775.4 702.3 776.8 691.1 C777.3 687.4 778.1 683.7 778.4 680 C780.2 660 781.7 640 783.3 620 C784.7 603 786.2 586 787.3 569 C788.6 548.5 789.5 527.9 790.6 507.4 C791.7 486.9 792.9 466.5 794 446 C795 425.9 795.7 405.8 796.9 385.7 C798.1 365.2 799.7 344.8 801.1 324.3 C801.6 317.5 801.8 310.7 802.4 303.9 C802.9 298.4 803.8 293 804.6 287.6 C805.3 283.2 806 278.7 806.9 274.3 C807.5 271.3 808.2 268.3 809.1 265.4 C809.2 265 809.4 264.3 809.8 264.3 C811.6 264.3 813.4 264.6 815 265.4 C816.5 266.2 817.2 268.1 818.7 269.1 C820.3 270.1 822 271.3 823.9 271.3 C825.5 271.3 826.9 270 828.3 269.1 C830.1 268 831.6 266.3 833.5 265.4 C834.9 264.7 836.5 264.4 838 264.3 C839.7 264.2 841.5 264.4 843.1 265 C845 265.8 846.4 267.5 848.3 268.4 C849.7 269 851.3 269.6 852.8 269.5 C854.2 269.4 855.3 268.4 856.5 267.6 C857.8 266.7 858.8 265.4 860.2 264.7 C861.1 264.3 862.2 264 863.1 264.3 C863.9 264.5 864.7 265.3 865 266.1 C865.8 268.2 865.8 270.6 866.1 272.8 C866.5 276 866.9 279.2 867.2 282.4 C867.6 286.1 867.8 289.9 868.3 293.6 C868.7 297 869.4 300.5 869.8 303.9 C870.6 310.7 871.2 317.4 871.7 324.2 C872.4 333.7 873.1 343.3 873.5 352.8 C874 363.7 874.1 374.5 874.4 385.4 C875 405.7 875.7 426.1 876.3 446.4 C877 466.8 877.6 487.3 878.3 507.7 C879 528.3 879.7 548.9 880.7 569.5 C881.7 589.9 883 610.2 884.1 630.6 C885.2 650.7 886.1 670.9 887.4 691 C888.1 702.7 889 714.4 890.1 726 C891 734.7 892.2 743.4 893.4 752.1 C894.8 762 896.1 771.9 897.9 781.7 C899.8 792.2 901.8 802.6 904.6 812.9 C907 822 909.5 831.2 913.5 839.7 C916.2 845.5 920.2 850.8 924.7 855.3 C928.5 859.1 933.1 862.2 938 864.2 C945.1 867.1 952.8 868.5 960.3 869.8 C968.4 871.2 976.7 872 984.9 872.5 C995.3 873.1 1005.6 872.9 1016 873 C1029 873.1 1042 873 1055 873" fill="none" stroke="#2626bc" stroke-width="1.15" stroke-linejoin="round"/>
<path d="M606 581 C612.9 577 620.1 573.3 626.8 569 C636.6 562.7 646.4 556.3 655.7 549.3 C663.5 543.4 670.8 537 678 530.4 C686.1 523 693.7 515.2 701.4 507.4 C704.9 503.9 708.3 500.2 711.5 496.5 C716.1 491.2 720.9 486 724.9 480.2 C729.4 473.8 732.9 466.7 737.1 460 C740 455.4 743.3 451.1 746 446.3 C751 437.3 755.9 428.2 760.1 418.8 C764.9 408 768.9 396.8 773.1 385.7 C775.6 379 778 372.1 780.2 365.3 C782.6 358.1 784.6 350.7 786.9 343.5 C789 337.1 791.3 330.7 793.5 324.3 C795.5 318.5 797 312.5 799.4 306.9 C800.2 304.9 801.6 303.2 803.1 301.7 C804.1 300.7 805.4 299.7 806.9 299.5 C810.3 299.1 813.8 299.5 817.2 299.9 C819.5 300.1 821.6 301.4 823.9 301.3 C826.2 301.2 828.3 299.7 830.6 299.5 C836 299.1 841.5 299.1 846.9 299.5 C848.7 299.6 850.2 301 852 301 C853.8 301 855.4 299.7 857.2 299.5 C859.9 299.2 862.8 298.8 865.4 299.5 C866.7 299.8 867.5 301.3 868.3 302.4 C869.7 304.5 871 306.8 872 309.1 C873.1 311.7 873.7 314.6 874.6 317.3 C875.4 319.6 876.4 321.8 877 324.2 C879 332.5 880.6 340.9 882.4 349.2 C885 361.3 887.6 373.4 890.4 385.4 C892.9 396 895.8 406.5 898.4 417 C900.9 426.8 902.9 436.7 905.7 446.4 C908.7 457 912.3 467.5 915.7 478 C919 487.9 922.2 497.9 925.8 507.7 C929.6 518 933.9 528.1 938 538.2 C942.3 548.7 946.4 559.2 951 569.5 C955.7 579.8 960.8 589.9 965.9 600 C971 610.2 975.9 620.6 981.5 630.6 C990.2 645.9 999.7 660.7 1008.7 675.9 C1011.6 680.9 1014.1 686.1 1017.2 691 C1024 701.7 1031.2 712.3 1038.4 722.7 C1045.3 732.6 1052.5 742.3 1059.6 752.1 C1067 762.3 1074.3 772.7 1081.9 782.8 C1089.5 793 1097.6 802.8 1105.3 812.9 C1112.5 822.5 1119.3 832.3 1126.5 841.9 C1134.4 852.5 1142.6 863 1150.6 873.6" fill="none" stroke="#cf3c38" stroke-width="1.0" stroke-linejoin="round"/>
</g>
<rect x="709.5" y="494.5" width="4" height="4" fill="#000" stroke="#fff" stroke-width="1"/>
<rect x="709.5" y="846.5" width="4" height="4" fill="#000" stroke="#fff" stroke-width="1"/>
<!-- panels -->
<rect x="541" y="216" width="1" height="681" fill="#c4d6f4"/><rect x="605" y="263" width="1" height="611" fill="#f6f4ec"/>
<rect x="541" y="264" width="64" height="18" fill="#fff"/><path d="M541.5 281.5 V264.5 H604.5" stroke="#716f64" fill="none"/><path d="M541.5 281.5 H604.5 V264.5" stroke="#fff" fill="none"/>
<text x="545" y="276" font-size="11" textLength="17.500" lengthAdjust="spacingAndGlyphs">5dB</text>
<path d="M541.500 547.500 V467.500 H605.500" stroke="#fff" fill="none"/><path d="M541.500 547.500 H605.500 V467.500" stroke="#aca899" fill="none"/><path d="M541 548.500 H606" stroke="#fff" fill="none"/>
<circle cx="556" cy="482.5" r="5.500" fill="#fff" stroke="#d0cdbc" stroke-width="1"/><path d="M552 486.5 A5.500 5.500 0 0 1 560 478.5" fill="none" stroke="#55534a" stroke-width="1.200"/>
<text x="567.500" y="486.5" font-size="12" textLength="17" lengthAdjust="spacingAndGlyphs">S11</text>
<circle cx="1208" cy="482.5" r="5.500" fill="#fff" stroke="#d0cdbc" stroke-width="1"/><path d="M1204 486.5 A5.500 5.500 0 0 1 1212 478.5" fill="none" stroke="#55534a" stroke-width="1.200"/>
<circle cx="556" cy="498.5" r="5.500" fill="#fff" stroke="#d0cdbc" stroke-width="1"/><path d="M552 502.5 A5.500 5.500 0 0 1 560 494.5" fill="none" stroke="#55534a" stroke-width="1.200"/>
<text x="567.500" y="502.5" font-size="12" textLength="17" lengthAdjust="spacingAndGlyphs">S21</text>
<circle cx="1208" cy="498.5" r="5.500" fill="#fff" stroke="#d0cdbc" stroke-width="1"/><path d="M1204 502.5 A5.500 5.500 0 0 1 1212 494.5" fill="none" stroke="#55534a" stroke-width="1.200"/>
<circle cx="556" cy="514.5" r="5.500" fill="#fff" stroke="#d0cdbc" stroke-width="1"/><path d="M552 518.5 A5.500 5.500 0 0 1 560 510.5" fill="none" stroke="#55534a" stroke-width="1.200"/><circle cx="556" cy="514.5" r="2" fill="#000"/>
<text x="567.500" y="518.5" font-size="12" textLength="17" lengthAdjust="spacingAndGlyphs">S12</text>
<circle cx="1208" cy="514.5" r="5.500" fill="#fff" stroke="#d0cdbc" stroke-width="1"/><path d="M1204 518.5 A5.500 5.500 0 0 1 1212 510.5" fill="none" stroke="#55534a" stroke-width="1.200"/><circle cx="1208" cy="514.5" r="2" fill="#000"/>
<circle cx="556" cy="530.5" r="5.500" fill="#fff" stroke="#d0cdbc" stroke-width="1"/><path d="M552 534.5 A5.500 5.500 0 0 1 560 526.5" fill="none" stroke="#55534a" stroke-width="1.200"/>
<text x="567.500" y="534.5" font-size="12" textLength="17" lengthAdjust="spacingAndGlyphs">S22</text>
<circle cx="1208" cy="530.5" r="5.500" fill="#fff" stroke="#d0cdbc" stroke-width="1"/><path d="M1204 534.5 A5.500 5.500 0 0 1 1212 526.5" fill="none" stroke="#55534a" stroke-width="1.200"/>
<circle cx="569.500" cy="572.500" r="4" fill="#d81414" stroke="#7a1a10" stroke-width="1"/>
<rect x="542" y="590" width="62" height="17" fill="#fff"/><path d="M542.5 606.5 V590.5 H603.5" stroke="#716f64" fill="none"/><path d="M542.5 606.5 H603.5 V590.5" stroke="#fff" fill="none"/>
<text x="545" y="602.500" font-size="11" textLength="38" lengthAdjust="spacingAndGlyphs">20Log(V</text>
<rect x="588" y="592" width="14" height="13" fill="#e3dfca"/><path d="M588.500 604.500 V592.500 H601.500" stroke="#fff" fill="none"/><path d="M588.500 604.500 H601.500 V592.500" stroke="#716f64" fill="none"/><path d="M591.500 597 H598.500 L595 600.500 Z" fill="#000"/>
<rect x="541" y="866" width="64" height="12" fill="#fff"/><path d="M541.5 877.5 V866.5 H604.5" stroke="#716f64" fill="none"/><path d="M541.5 877.5 H604.5 V866.5" stroke="#fff" fill="none"/>
<clipPath id="c90"><rect x="542" y="866" width="62" height="8"/></clipPath><text x="545" y="877" font-size="11" clip-path="url(#c90)">-90dB</text>
<path d="M1196.500 547.500 V467.500 H1215" stroke="#fff" fill="none"/><path d="M1196 547.500 H1215" stroke="#aca899" fill="none"/><path d="M1196 548.500 H1215" stroke="#fff" fill="none"/>
<rect x="1196" y="264" width="30" height="18" fill="#fff"/><path d="M1196.5 281.5 V264.5 H1225.5" stroke="#716f64" fill="none"/><path d="M1196.5 281.5 H1225.5 V264.5" stroke="#fff" fill="none"/>
<text x="1200" y="276.500" font-size="11">1</text>
<rect x="1196" y="590" width="30" height="17" fill="#fff"/><path d="M1196.5 606.5 V590.5 H1225.5" stroke="#716f64" fill="none"/><path d="M1196.5 606.5 H1225.5 V590.5" stroke="#fff" fill="none"/>
<text x="1197" y="602.500" font-size="11">Linear</text>
<rect x="1196" y="862" width="30" height="12" fill="#fff"/><path d="M1196.5 873.5 V862.5 H1225.5" stroke="#716f64" fill="none"/><path d="M1196.5 873.5 H1225.5 V862.5" stroke="#fff" fill="none"/>
<text x="1199" y="873.500" font-size="11">0</text>
<rect x="541" y="874" width="674" height="23" fill="#e3dfca"/>
<text x="542" y="893" font-size="11" textLength="24" lengthAdjust="spacingAndGlyphs">Start:</text>
<rect x="573" y="877" width="88" height="22" fill="#fff"/><path d="M573.5 898.5 V877.5 H660.5" stroke="#716f64" fill="none"/><path d="M573.5 898.5 H660.5 V877.5" stroke="#fff" fill="none"/>
<text x="577" y="890.500" font-size="11" textLength="27.500" lengthAdjust="spacingAndGlyphs">2MHz</text>
<rect x="864" y="874" width="72" height="20" fill="#fff"/><path d="M864.5 893.5 V874.5 H935.5" stroke="#716f64" fill="none"/><path d="M864.5 893.5 H935.5 V874.5" stroke="#fff" fill="none"/>
<text x="867" y="887" font-size="11" textLength="48" lengthAdjust="spacingAndGlyphs">500 points</text>
<text x="1116.500" y="893" font-size="11" textLength="24" lengthAdjust="spacingAndGlyphs">Stop:</text>
<rect x="1148" y="877" width="70" height="22" fill="#fff"/><path d="M1148.5 898.5 V877.5 H1217.5" stroke="#716f64" fill="none"/><path d="M1148.5 898.5 H1217.5 V877.5" stroke="#fff" fill="none"/>
<text x="1152" y="891" font-size="11" textLength="42" lengthAdjust="spacingAndGlyphs">10.1MHz</text>

</svg>
</div>
</body>
</html>
